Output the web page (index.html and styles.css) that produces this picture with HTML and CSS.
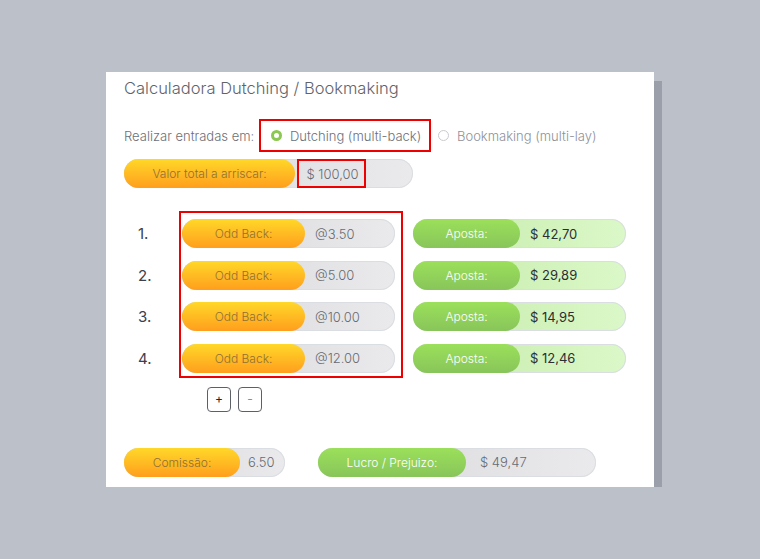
FILE: index.html
```html
<!DOCTYPE html>
<html lang="pt">
<head>
<meta charset="utf-8">
<title>Calculadora Dutching / Bookmaking</title>
<link rel="stylesheet" href="styles.css">
</head>
<body>
<div class="card">
  <h1 class="title">Calculadora Dutching / Bookmaking</h1>

  <div class="mode">
    <span class="mode-label">Realizar entradas em:</span>
    <label class="choice choice-on">
      <span class="radio radio-on"></span>
      <span>Dutching (multi-back)</span>
    </label>
    <label class="choice choice-off">
      <span class="radio"></span>
      <span>Bookmaking (multi-lay)</span>
    </label>
  </div>

  <div class="pill pill-total">
    <span class="lbl lbl-orange">Valor total a arriscar:</span>
    <span class="val val-marked">$ 100,00</span>
  </div>

  <div class="rows">
    <div class="nums">
      <div class="num">1.</div>
      <div class="num">2.</div>
      <div class="num">3.</div>
      <div class="num">4.</div>
    </div>
    <div class="odds">
      <div class="pill pill-odd"><span class="lbl lbl-orange">Odd Back:</span><span class="val">@3.50</span></div>
      <div class="pill pill-odd"><span class="lbl lbl-orange">Odd Back:</span><span class="val">@5.00</span></div>
      <div class="pill pill-odd"><span class="lbl lbl-orange">Odd Back:</span><span class="val">@10.00</span></div>
      <div class="pill pill-odd"><span class="lbl lbl-orange">Odd Back:</span><span class="val">@12.00</span></div>
    </div>
    <div class="stakes">
      <div class="pill pill-stake"><span class="lbl lbl-green">Aposta:</span><span class="val val-dark">$ 42,70</span></div>
      <div class="pill pill-stake"><span class="lbl lbl-green">Aposta:</span><span class="val val-dark">$ 29,89</span></div>
      <div class="pill pill-stake"><span class="lbl lbl-green">Aposta:</span><span class="val val-dark">$ 14,95</span></div>
      <div class="pill pill-stake"><span class="lbl lbl-green">Aposta:</span><span class="val val-dark">$ 12,46</span></div>
    </div>
  </div>

  <div class="buttons">
    <button class="btn">+</button>
    <button class="btn btn-minus">-</button>
  </div>

  <div class="footer">
    <div class="pill pill-comm"><span class="lbl lbl-orange">Comissão:</span><span class="val">6.50</span></div>
    <div class="pill pill-profit"><span class="lbl lbl-green">Lucro / Prejuizo:</span><span class="val">$ 49,47</span></div>
  </div>
</div>
</body>
</html>
```

FILE: styles.css
```css
* { box-sizing: border-box; }

body {
  margin: 0;
  background: #bcc0c9;
  font-family: "Inter", "Noto Sans", "DejaVu Sans", sans-serif;
  color: #6f737d;
}

.card {
  margin: 72px 0 0 106px;
  width: 548px;
  height: 415px;
  background: #ffffff;
  padding: 0 18px;
  box-shadow: 8px 9px 0 #9a9fa9;
  display: flex;
  flex-direction: column;
}

.title {
  margin: 6px 0 0;
  height: 20px;
  font-size: 16.5px;
  line-height: 20px;
  font-weight: 300;
  color: #5f636e;
  white-space: nowrap;
}

.mode {
  margin-top: 21px;
  height: 33px;
  display: flex;
  align-items: center;
  font-size: 13px;
  font-weight: 300;
  white-space: nowrap;
}

.mode-label {
  width: 135px;
  color: #6c6f79;
}

.choice {
  display: flex;
  align-items: center;
  gap: 8px;
  height: 33px;
}

.choice-on {
  border: 2px solid #ee0000;
  padding: 0 6px 0 10px;
  width: 172px;
  color: #6c6f79;
}

.choice-off {
  margin-left: 7px;
  color: #8e9199;
}

.radio {
  width: 11px;
  height: 11px;
  border-radius: 50%;
  border: 1px solid #c9cbd0;
  background: #fff;
  flex: none;
}

.radio-on {
  border: 3px solid #8cc751;
}

.pill {
  display: flex;
  height: 29px;
  border-radius: 15px;
  background: linear-gradient(90deg, #d8d8da 0%, #eaeaec 100%);
  box-shadow: inset 0 0 0 1px #dadde2;
  font-size: 12px;
  font-weight: 300;
  white-space: nowrap;
}

.lbl {
  flex: none;
  display: flex;
  align-items: center;
  justify-content: center;
  height: 100%;
  border-radius: 15px;
}

.lbl-orange {
  background: linear-gradient(180deg, #ffd829 0%, #ff9e1d 100%);
  color: #8f7034;
}

.lbl-green {
  background: linear-gradient(180deg, #9be05a 0%, #88c55a 100%);
  color: #ffffff;
}

.val {
  display: flex;
  align-items: center;
  height: 100%;
  font-size: 13px;
  color: #676a73;
}

.pill-total {
  margin-top: 7px;
  width: 289px;
}
.pill-total .lbl { width: 171px; }

.val-marked {
  margin-left: 2px;
  border: 2px solid #ee0000;
  width: 69px;
  justify-content: center;
  padding-left: 2px;
}

.rows {
  margin-top: 23px;
  display: flex;
  align-items: flex-start;
}

.nums,
.stakes {
  padding-top: 8px;
  display: flex;
  flex-direction: column;
  gap: 12.67px;
}

.nums { width: 55px; }

.num {
  height: 29px;
  display: flex;
  align-items: center;
  padding-left: 14px;
  font-size: 15px;
  font-weight: 400;
  color: #3d404b;
}

.odds {
  border: 2px solid #ee0000;
  padding: 6px 6px 3px 1px;
  display: flex;
  flex-direction: column;
  gap: 12.67px;
}

.pill-odd { width: 213px; }
.pill-odd .lbl { width: 123px; }
.pill-odd .val { padding-left: 10px; }

.stakes { margin-left: 10px; }

.pill-stake {
  width: 213px;
  background: linear-gradient(90deg, #c4eba9 0%, #dbf8c8 100%);
}
.pill-stake .lbl { width: 107px; }

.val-dark {
  padding-left: 10px;
  color: #2c2e34;
  font-weight: 400;
}

.buttons {
  margin: 9px 0 0 83px;
  display: flex;
  gap: 7px;
}

.btn {
  width: 24px;
  height: 25px;
  padding: 0;
  border: 1px solid #5d6068;
  border-radius: 4px;
  background: #fff;
  font-family: inherit;
  font-size: 12px;
  line-height: 1;
  color: #222;
}

.btn-minus {
  color: #8a8c92;
}

.footer {
  margin-top: 36px;
  display: flex;
  gap: 33px;
}

.pill-comm { width: 161px; }
.pill-comm .lbl { width: 116px; }
.pill-comm .val { padding-left: 8px; }

.pill-profit { width: 278px; }
.pill-profit .lbl { width: 148px; }
.pill-profit .val { padding-left: 14px; }
```
